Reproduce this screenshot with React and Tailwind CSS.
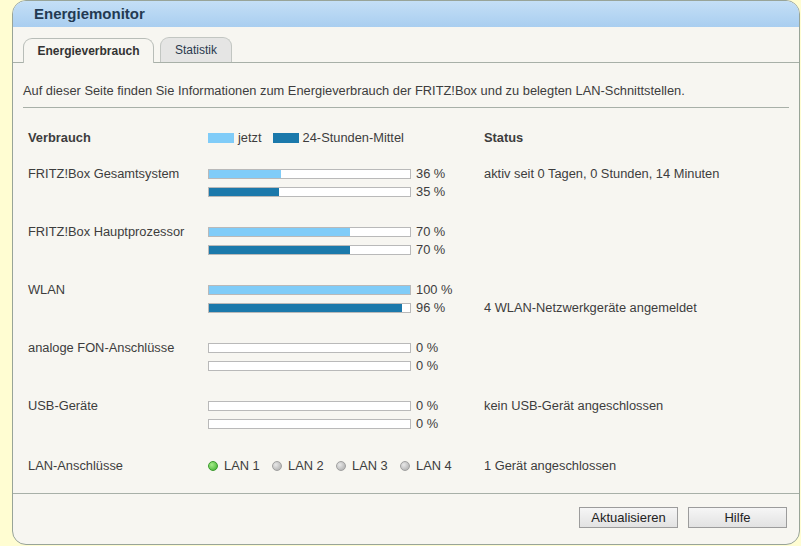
import React from 'react';

const rows = [
  { label: 'FRITZ!Box Gesamtsystem', now: 36, avg: 35, status: 'aktiv seit 0 Tagen, 0 Stunden, 14 Minuten', statusRow: 0 },
  { label: 'FRITZ!Box Hauptprozessor', now: 70, avg: 70 },
  { label: 'WLAN', now: 100, avg: 96, status: '4 WLAN-Netzwerkgeräte angemeldet', statusRow: 1 },
  { label: 'analoge FON-Anschlüsse', now: 0, avg: 0 },
  { label: 'USB-Geräte', now: 0, avg: 0, status: 'kein USB-Gerät angeschlossen', statusRow: 0 },
];

const Bar = ({ value, dark }) => (
  <div className="flex items-center">
    <div className="w-[203px] h-[10px] border border-[#b9b9b9] bg-white">
      <div className={`h-full ${dark ? 'bg-[#1b79ab]' : 'bg-[#80ccf8]'}`} style={{ width: `${value}%` }}></div>
    </div>
    <span className="ml-[5px]">{value} %</span>
  </div>
);

const Led = ({ on, label }) => (
  <div className="flex items-center w-[64px]">
    <span
      className={`w-[10px] h-[10px] rounded-full border ${
        on ? 'bg-[radial-gradient(circle_at_35%_35%,#a6ec8a,#3cae2c)] border-[#3a9a2c]' : 'bg-[radial-gradient(circle_at_35%_35%,#e8e8e8,#a9a9a9)] border-[#a0a0a0]'
      }`}
    ></span>
    <span className="ml-[6px]">{label}</span>
  </div>
);

export default function App() {
  return (
    <div className="w-[801px] h-[546px] bg-[#fffdd2] pl-[12px] pr-[1px] pb-[1px] font-['Liberation_Sans',Arial,sans-serif] text-[12.85px] text-[#3d3d3d]">
      <div className="h-full rounded-[14px] border border-[#98a498] bg-[#f7f6f1] overflow-hidden flex flex-col">
        <div className="h-[26px] shrink-0 bg-gradient-to-b from-[#c4dff6] to-[#a9cef0] pl-[21px] flex items-center text-[15px] font-bold text-[#243a52]">
          Energiemonitor
        </div>
        <div className="h-[36px] shrink-0 border-b border-[#a8b0a8] flex items-end pl-[10px]">
          <div className="w-[131px] h-[25px] -mb-px rounded-t-[9px] border border-b-0 border-[#b8bdb8] bg-[#f7f6f1] flex items-center justify-center text-[12px] font-bold text-[#333]">
            Energieverbrauch
          </div>
          <div className="ml-[6px] w-[72px] h-[25px] rounded-t-[9px] border border-b-0 border-[#c2c6c2] bg-[#e5e5e4] flex items-center justify-center text-[12px] text-[#2a3a4e]">
            Statistik
          </div>
        </div>
        <div className="flex-1 px-[10px]">
          <div className="pt-[20px] pb-[9px] leading-[15px] border-b border-[#a8b0a8]">
            Auf dieser Seite finden Sie Informationen zum Energieverbrauch der FRITZ!Box und zu belegten LAN-Schnittstellen.
          </div>
          <div className="pl-[5px]">
            <div className="mt-[21px] h-[18px] flex items-center">
              <div className="w-[180px] font-bold">Verbrauch</div>
              <div className="w-[276px] flex items-center">
                <span className="w-[26px] h-[10px] bg-[#80ccf8]"></span>
                <span className="ml-[4px]">jetzt</span>
                <span className="ml-[11px] w-[26px] h-[10px] bg-[#1b79ab]"></span>
                <span className="ml-[4px]">24-Stunden-Mittel</span>
              </div>
              <div className="font-bold">Status</div>
            </div>
            <div className="mt-[18px]">
              {rows.map((r, i) => (
                <div key={r.label} className={i > 0 ? 'mt-[22px]' : ''}>
                  <div className="h-[18px] flex items-center">
                    <div className="w-[180px]">{r.label}</div>
                    <div className="w-[276px]"><Bar value={r.now} /></div>
                    <div>{r.status && r.statusRow === 0 ? r.status : ''}</div>
                  </div>
                  <div className="h-[18px] flex items-center">
                    <div className="w-[180px]"></div>
                    <div className="w-[276px]"><Bar value={r.avg} dark /></div>
                    <div>{r.status && r.statusRow === 1 ? r.status : ''}</div>
                  </div>
                </div>
              ))}
            </div>
            <div className="mt-[24px] h-[18px] flex items-center">
              <div className="w-[180px]">LAN-Anschlüsse</div>
              <div className="w-[276px] flex items-center">
                <Led on label="LAN 1" />
                <Led label="LAN 2" />
                <Led label="LAN 3" />
                <Led label="LAN 4" />
              </div>
              <div>1 Gerät angeschlossen</div>
            </div>
          </div>
        </div>
        <div className="h-[51px] shrink-0 border-t border-[#a8b0a8] flex justify-end items-start pt-[13px] pr-[12px] gap-[10px]">
          <button className="w-[99px] h-[21px] border border-[#9c9c9c] bg-gradient-to-b from-[#f6f6f6] to-[#e2e2e2] text-[13px] text-[#222]">Aktualisieren</button>
          <button className="w-[99px] h-[21px] border border-[#9c9c9c] bg-gradient-to-b from-[#f6f6f6] to-[#e2e2e2] text-[13px] text-[#222]">Hilfe</button>
        </div>
      </div>
    </div>
  );
}
